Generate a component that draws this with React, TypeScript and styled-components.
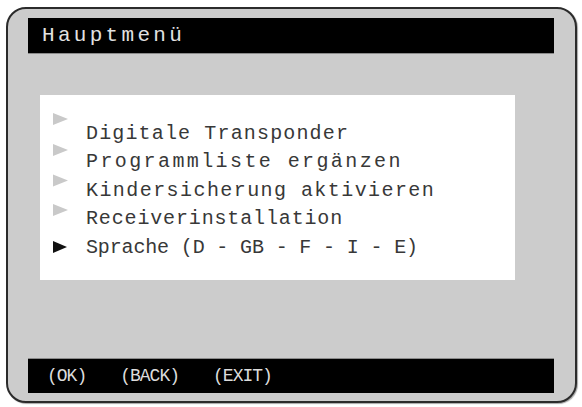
import React from "react";
import styled, { createGlobalStyle } from "styled-components";

const Global = createGlobalStyle`
  html, body { margin: 0; padding: 0; background: #ffffff; }
  body { font-family: "Liberation Mono", "DejaVu Sans Mono", monospace; }
`;

const Page = styled.div`
  width: 582px;
  height: 407px;
  padding: 7px 5px 4px 6px;
  box-sizing: border-box;
  background: #ffffff;
`;

const Frame = styled.div`
  width: 571px;
  height: 396px;
  box-sizing: border-box;
  border: 2px solid #2b2b2b;
  border-radius: 20px;
  background: #cccccc;
  padding: 9px 21px 8px 20px;
  display: flex;
  flex-direction: column;
  box-shadow: 1px 1px 1px rgba(0, 0, 0, 0.35);
`;

const TitleBar = styled.div`
  height: 36px;
  background: #000000;
  display: flex;
  align-items: center;
  padding-left: 14px;
  color: #e2e2e2;
  font-size: 21px;
  letter-spacing: 3.3px;
  border-bottom: 1px solid #8a8a8a;
  box-sizing: border-box;
`;

const Panel = styled.div`
  margin-top: 41px;
  margin-left: 12px;
  width: 475px;
  height: 185px;
  background: #ffffff;
  box-sizing: border-box;
  padding: 24px 0 0 13px;
  display: flex;
  flex-direction: column;
`;

const Row = styled.div`
  display: flex;
  align-items: center;
  height: 28.5px;
`;

const Arrow = styled.span<{ $active?: boolean; $lift: number }>`
  width: 33px;
  flex: none;
  display: flex;
  align-items: center;
  transform: translateY(${(p) => -p.$lift}px);
  &::before {
    content: "";
    display: block;
    width: 0;
    height: 0;
    border-top: 6.5px solid transparent;
    border-bottom: 6.5px solid transparent;
    border-left: ${(p) => (p.$active ? "14px solid #111111" : "15px solid #c9c9c9")};
  }
`;

const Label = styled.span<{ $spacing: number }>`
  font-size: 20px;
  color: #383838;
  white-space: pre;
  letter-spacing: ${(p) => p.$spacing}px;
`;

const BottomBar = styled.div`
  margin-top: auto;
  height: 35px;
  background: #000000;
  display: flex;
  align-items: center;
  gap: 34px;
  padding-left: 19px;
  color: #dcdcdc;
  font-size: 18px;
  letter-spacing: -1px;
  border-top: 1px solid #8a8a8a;
  box-sizing: border-box;
`;

const Key = styled.span`
  white-space: pre;
`;

const items = [
  { text: "Digitale Transponder", lift: 14, spacing: 1.15 },
  { text: "Programmliste ergänzen", lift: 12, spacing: 2.4 },
  { text: "Kindersicherung aktivieren", lift: 9.5, spacing: 1.43 },
  { text: "Receiverinstallation", lift: 9, spacing: 0.85 },
  { text: "Sprache (D - GB - F - I - E)", lift: 0, spacing: -0.15, active: true },
];

export default function App() {
  return (
    <>
      <Global />
      <Page>
        <Frame>
          <TitleBar>Hauptmenü</TitleBar>
          <Panel>
            {items.map((it) => (
              <Row key={it.text}>
                <Arrow $active={it.active} $lift={it.lift} />
                <Label $spacing={it.spacing}>{it.text}</Label>
              </Row>
            ))}
          </Panel>
          <BottomBar>
            <Key>(OK)</Key>
            <Key>(BACK)</Key>
            <Key>(EXIT)</Key>
          </BottomBar>
        </Frame>
      </Page>
    </>
  );
}
